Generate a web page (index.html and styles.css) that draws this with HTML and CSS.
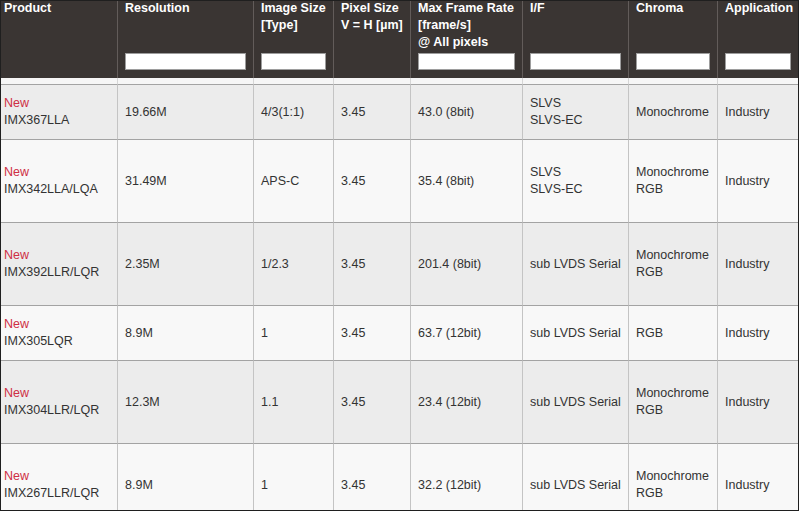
FILE: index.html
```html
<!DOCTYPE html>
<html lang="en">
<head>
<meta charset="utf-8">
<title>Sensor list</title>
<link rel="stylesheet" href="styles.css">
</head>
<body>
<div class="frame">
  <div class="grid">
    <div class="row head">
      <div class="cell"><span class="ht">Product</span></div>
      <div class="cell"><span class="ht">Resolution</span><input class="filter" type="text"></div>
      <div class="cell"><span class="ht">Image Size<br>[Type]</span><input class="filter" type="text"></div>
      <div class="cell"><span class="ht">Pixel Size<br>V = H [µm]</span></div>
      <div class="cell"><span class="ht">Max Frame Rate<br>[frame/s]<br>@ All pixels</span><input class="filter" type="text"></div>
      <div class="cell"><span class="ht">I/F</span><input class="filter" type="text"></div>
      <div class="cell"><span class="ht">Chroma</span><input class="filter" type="text"></div>
      <div class="cell"><span class="ht">Application</span><input class="filter" type="text"></div>
    </div>
    <div class="row spacer">
      <div class="cell"></div><div class="cell"></div><div class="cell"></div><div class="cell"></div>
      <div class="cell"></div><div class="cell"></div><div class="cell"></div><div class="cell"></div>
    </div>
    <div class="row short odd">
      <div class="cell"><span class="new">New</span><span>IMX367LLA</span></div>
      <div class="cell">19.66M</div>
      <div class="cell">4/3(1:1)</div>
      <div class="cell">3.45</div>
      <div class="cell">43.0 (8bit)</div>
      <div class="cell"><span>SLVS</span><span>SLVS-EC</span></div>
      <div class="cell">Monochrome</div>
      <div class="cell">Industry</div>
    </div>
    <div class="row tall even">
      <div class="cell"><span class="new">New</span><span>IMX342LLA/LQA</span></div>
      <div class="cell">31.49M</div>
      <div class="cell">APS-C</div>
      <div class="cell">3.45</div>
      <div class="cell">35.4 (8bit)</div>
      <div class="cell"><span>SLVS</span><span>SLVS-EC</span></div>
      <div class="cell"><span>Monochrome</span><span>RGB</span></div>
      <div class="cell">Industry</div>
    </div>
    <div class="row tall odd">
      <div class="cell"><span class="new">New</span><span>IMX392LLR/LQR</span></div>
      <div class="cell">2.35M</div>
      <div class="cell">1/2.3</div>
      <div class="cell">3.45</div>
      <div class="cell">201.4 (8bit)</div>
      <div class="cell">sub LVDS Serial</div>
      <div class="cell"><span>Monochrome</span><span>RGB</span></div>
      <div class="cell">Industry</div>
    </div>
    <div class="row short even">
      <div class="cell"><span class="new">New</span><span>IMX305LQR</span></div>
      <div class="cell">8.9M</div>
      <div class="cell">1</div>
      <div class="cell">3.45</div>
      <div class="cell">63.7 (12bit)</div>
      <div class="cell">sub LVDS Serial</div>
      <div class="cell">RGB</div>
      <div class="cell">Industry</div>
    </div>
    <div class="row tall odd">
      <div class="cell"><span class="new">New</span><span>IMX304LLR/LQR</span></div>
      <div class="cell">12.3M</div>
      <div class="cell">1.1</div>
      <div class="cell">3.45</div>
      <div class="cell">23.4 (12bit)</div>
      <div class="cell">sub LVDS Serial</div>
      <div class="cell"><span>Monochrome</span><span>RGB</span></div>
      <div class="cell">Industry</div>
    </div>
    <div class="row tall even">
      <div class="cell"><span class="new">New</span><span>IMX267LLR/LQR</span></div>
      <div class="cell">8.9M</div>
      <div class="cell">1</div>
      <div class="cell">3.45</div>
      <div class="cell">32.2 (12bit)</div>
      <div class="cell">sub LVDS Serial</div>
      <div class="cell"><span>Monochrome</span><span>RGB</span></div>
      <div class="cell">Industry</div>
    </div>
  </div>
</div>
</body>
</html>
```
FILE: styles.css
```css
html, body {
  margin: 0;
  padding: 0;
  background: #ffffff;
}

.frame {
  width: 799px;
  height: 511px;
  box-sizing: border-box;
  border: 1px solid #1f1f1f;
  overflow: hidden;
  font-family: "Liberation Sans", Arial, sans-serif;
  font-size: 12.5px;
  line-height: 17px;
  color: #333333;
}

.grid {
  display: flex;
  flex-direction: column;
}

.row {
  display: grid;
  grid-template-columns: 116px 136px 80px 77px 112px 106px 89px 81px;
  flex: none;
}

.cell {
  box-sizing: border-box;
  display: flex;
  flex-direction: column;
  justify-content: center;
  padding: 0 7px;
  border-left: 1px solid #c4c4c4;
  border-bottom: 1px solid #a3a3a3;
  white-space: nowrap;
  overflow: hidden;
}

.cell:first-child {
  border-left: none;
  padding-left: 3px;
}

/* header */
.head {
  height: 77px;
  background: #3a3533;
  color: #ffffff;
  font-weight: bold;
}

.head .cell {
  justify-content: flex-start;
  border-left-color: #625c5a;
  border-bottom: none;
  padding-bottom: 8px;
}

.head .cell:first-child {
  padding-left: 3px;
}

.ht {
  display: block;
  margin-top: -1px;
}

.filter {
  display: block;
  margin: auto 0 0 0;
  width: 100%;
  height: 17px;
  box-sizing: border-box;
  border: 1px solid #9d9d9d;
  background: #ffffff;
  padding: 0;
  font: inherit;
}

/* thin spacer row under the header */
.spacer {
  height: 7px;
  background: #f6f6f6;
}

.spacer .cell {
  border-left-color: #d6d6d6;
}

.short { height: 55px; }
.tall { height: 83px; }

.odd { background: #ececec; }
.even { background: #f8f8f8; }

.new {
  color: #cf2f45;
}
```
